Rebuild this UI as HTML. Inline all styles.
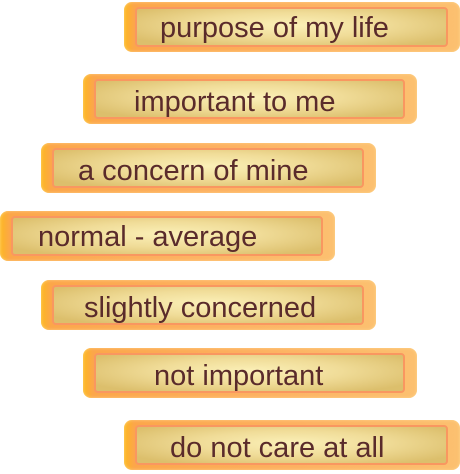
<!DOCTYPE html>
<html><head><style>
body{margin:0;width:460px;height:474px;background:#fff;position:relative;overflow:hidden;font-family:"Liberation Sans",sans-serif}
.b{position:absolute;height:50px;border-radius:8px;background:linear-gradient(90deg,#fdb820 0%,#fca64a 3%,#fdb060 50%,#fcc070 100%);box-shadow:inset 0 0 3px rgba(255,220,150,.8)}
.i{position:absolute;left:11px;right:12px;top:5px;bottom:5px;border:2px solid #f99760;border-radius:4px;background:radial-gradient(ellipse 60% 70% at 50% 45%,#fbf0b8 0%,#f0dc98 50%,#dcbf6c 100%)}
.t{position:absolute;top:0;font-size:29px;line-height:40px;color:#5a2b2b;white-space:nowrap}
</style></head><body>
<div class="b" style="left:124px;top:2px;width:336px"><div class="i"></div><span class="t" style="left:36px;top:6px">purpose of my life</span></div>
<div class="b" style="left:83px;top:74px;width:334px"><div class="i"></div><span class="t" style="left:51px;top:8px">important to me</span></div>
<div class="b" style="left:41px;top:143px;width:335px"><div class="i"></div><span class="t" style="left:37px;top:8px">a concern of mine</span></div>
<div class="b" style="left:0;top:211px;width:335px"><div class="i"></div><span class="t" style="left:38px;top:6px">normal - average</span></div>
<div class="b" style="left:41px;top:280px;width:335px"><div class="i"></div><span class="t" style="left:43px;top:8px">slightly concerned</span></div>
<div class="b" style="left:83px;top:348px;width:334px"><div class="i"></div><span class="t" style="left:71px;top:8px">not important</span></div>
<div class="b" style="left:124px;top:420px;width:336px"><div class="i"></div><span class="t" style="left:46px;top:8px">do not care at all</span></div>
</body></html>
